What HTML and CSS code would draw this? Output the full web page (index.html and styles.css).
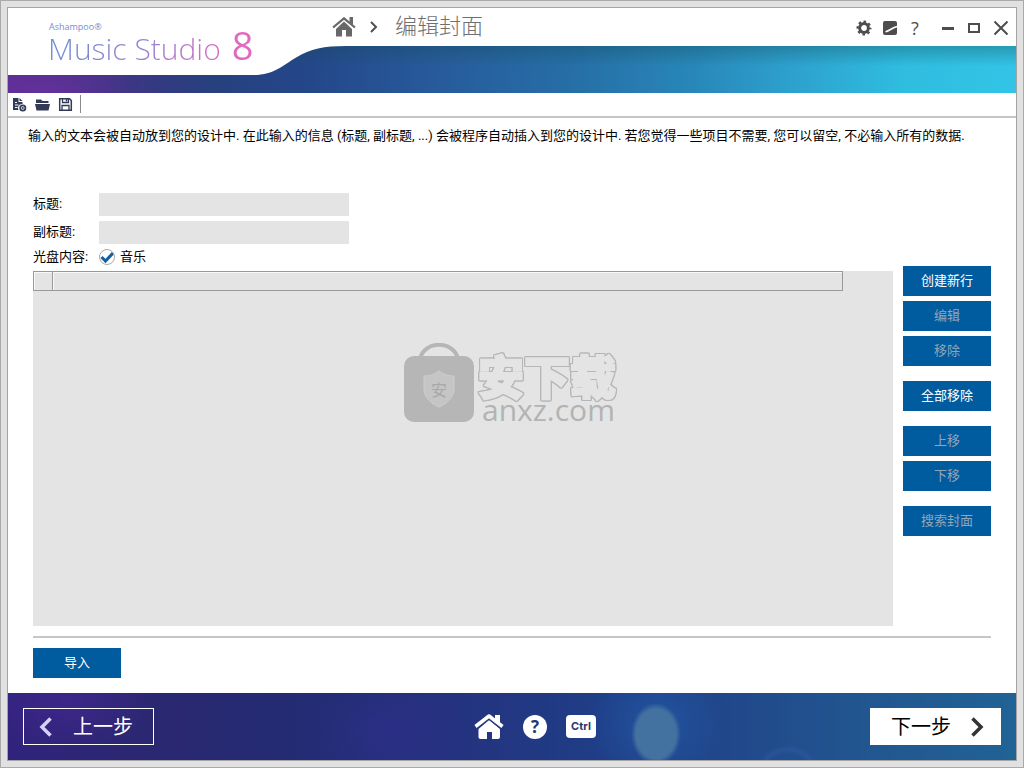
FILE: index.html
```html
<!DOCTYPE html>
<html lang="zh-CN">
<head>
<meta charset="utf-8">
<title>Ashampoo Music Studio 8</title>
<link rel="stylesheet" href="styles.css">
</head>
<body>
<div class="frame">
<div class="window">
  <header class="header">
    <svg class="header-shape" aria-hidden="true"><path d="M0 0H4000V38H338C316 38 302 41 289 49C275 57 266 67 246 67H0Z" fill="#fff"/></svg>
    <div class="logo">
      <span class="brand">Ashampoo®</span>
      <span class="product"><span>Music Studio</span><b>8</b></span>
    </div>
    <nav class="crumbs">
      <a href="#" aria-label="主页"><svg width="24" height="20" viewBox="0 0 24 20"><path d="M12 4.500L20 12V19.500H14V13H10V19.500H4V12Z" fill="#686868"/><path d="M1 10.500L12 1.300L23 10.500" fill="none" stroke="#686868" stroke-width="2.200"/><path d="M17.500 0H21V8L17.500 5Z" fill="#686868"/></svg></a>
      <svg class="sep" width="9" height="12" viewBox="0 0 9 12"><path d="M2 1L7 6L2 11" fill="none" stroke="#505050" stroke-width="2"/></svg>
      <h1>编辑封面</h1>
    </nav>
    <div class="controls">
      <button aria-label="设置"><svg width="16" height="16" viewBox="0 0 16 16"><circle cx="8" cy="8" r="4.400" fill="none" stroke="#4d4d4d" stroke-width="3"/><circle cx="8" cy="8" r="6.400" fill="none" stroke="#4d4d4d" stroke-width="2.200" stroke-dasharray="2.500 2.530" stroke-dashoffset="1.250"/></svg></button>
      <button aria-label="皮肤"><svg width="16" height="16" viewBox="0 0 16 16"><rect x="1" y="1" width="14" height="14" rx="2" fill="#4d4d4d"/><path d="M3.500 11.800C7 11 9 8.500 15 6.500" fill="none" stroke="#fff" stroke-width="1.600"/></svg></button>
      <button class="help" aria-label="帮助">?</button>
      <button class="min" aria-label="最小化"><svg width="14" height="16" viewBox="0 0 14 16"><path d="M1 8.500H13" stroke="#4d4d4d" stroke-width="3"/></svg></button>
      <button class="max" aria-label="最大化"><svg width="14" height="16" viewBox="0 0 14 16"><rect x="2" y="4" width="10" height="8" fill="none" stroke="#4d4d4d" stroke-width="2"/></svg></button>
      <button class="close" aria-label="关闭"><svg width="16" height="16" viewBox="0 0 16 16"><path d="M1.500 1.500L14.500 14.500M14.500 1.500L1.500 14.500" stroke="#4d4d4d" stroke-width="2"/></svg></button>
    </div>
  </header>

  <div class="toolbar">
    <button aria-label="新建"><svg width="15" height="15" viewBox="0 0 15 15"><path d="M1 1H6.500V5H10.500V7A4 4 0 0 0 6.500 13H1Z" fill="#333a56"/><path d="M7.500 1L10.500 4H7.500Z" fill="#333a56"/><path d="M3 5.500H5M3 8H6.500M3 10.500H5.500" stroke="#fff"/><circle cx="10.800" cy="11" r="2.600" fill="#fff" stroke="#333a56" stroke-width="1.800"/><circle cx="10.800" cy="11" r="1" fill="#333a56"/></svg></button>
    <button aria-label="打开"><svg width="15" height="15" viewBox="0 0 15 15"><path d="M1 2.500H6L7.500 4H13.500V6H1Z" fill="#333a56"/><path d="M0 7H15L13.500 13.500H1.500Z" fill="#333a56"/></svg></button>
    <button aria-label="保存"><svg width="15" height="15" viewBox="0 0 15 15"><path d="M1.700 1.700H11.500L13.300 3.500V13.300H1.700Z" fill="none" stroke="#333a56" stroke-width="1.500"/><path d="M4.500 2V5.500H10.500V2M4 13V8.500H11V13" fill="none" stroke="#333a56" stroke-width="1.300"/><path d="M8.500 2V4.500" stroke="#333a56" stroke-width="1.500"/></svg></button>
  </div>

  <main class="main">
    <p class="intro">输入的文本会被自动放到您的设计中. 在此输入的信息 (标题, 副标题, ...) 会被程序自动插入到您的设计中. 若您觉得一些项目不需要, 您可以留空, 不必输入所有的数据.</p>
    <form class="fields">
      <label for="title">标题:</label><input id="title" type="text">
      <label for="subtitle">副标题:</label><input id="subtitle" type="text">
      <span>光盘内容:</span><label class="check"><input type="checkbox" checked>音乐</label>
    </form>
    <div class="editor">
      <div class="list">
        <table><thead><tr><th class="mark"></th><th></th></tr></thead></table>
        <div class="watermark">
          <svg width="72" height="82" viewBox="0 0 72 82"><path d="M17 16C21 -3 51 -3 55 16" fill="none" stroke="#b6b6b6" stroke-width="4"/><rect x="1" y="13" width="70" height="66" rx="10" fill="#b6b6b6"/><path d="M36 28C41 32 46 33 51 33V46C51 55 43 61 36 64C29 61 21 55 21 46V33C26 33 31 32 36 28Z" fill="#c5c5c5" stroke="#cecece"/><text x="36" y="53" text-anchor="middle" class="shield">安</text></svg>
          <div class="words"><span class="cn">安下载</span><span class="site">anxz.com</span></div>
        </div>
      </div>
      <div class="actions">
        <button class="btn">创建新行</button>
        <button class="btn" disabled>编辑</button>
        <button class="btn" disabled>移除</button>
        <button class="btn group">全部移除</button>
        <button class="btn group" disabled>上移</button>
        <button class="btn" disabled>下移</button>
        <button class="btn group" disabled>搜索封面</button>
      </div>
    </div>
    <div class="import"><button class="btn">导入</button></div>
  </main>

  <footer class="footer">
    <button class="step prev"><svg width="14" height="20" viewBox="0 0 14 20"><path d="M11.500 1.500L3 10L11.500 18.500" fill="none" stroke="#d5d2fa" stroke-width="3.500"/></svg>上一步</button>
    <nav class="links">
      <a href="#" aria-label="主页"><svg width="30" height="26" viewBox="0 0 30 26"><path d="M15 6L26 15V23Q26 25 24 25H18V18H13V25H6.500Q4.500 25 4.500 23V15Z" fill="#fff"/><path d="M1.500 12.500L15 2L28.500 12.500" fill="none" stroke="#fff" stroke-width="3.500" stroke-linejoin="round"/><path d="M21 1H26V9L21 5Z" fill="#fff"/><path d="M3.500 14.500L15 5.500L26.500 14.500" fill="none" stroke="#243b82"/></svg></a>
      <a href="#" class="round">?</a>
      <a href="#" class="ctrl">Ctrl</a>
    </nav>
    <button class="step next">下一步<svg width="14" height="20" viewBox="0 0 14 20"><path d="M2.500 1.500L11 10L2.500 18.500" fill="none" stroke="#333" stroke-width="3.500"/></svg></button>
  </footer>
</div>
</div>
</body>
</html>
```
FILE: styles.css
```css
* { box-sizing: border-box; }
body {
  margin: 0;
  font: 13px/20px Roboto, "Noto Sans CJK SC", sans-serif;
  color: #000;
}
button, input { font: inherit; margin: 0; padding: 0; border: 0; background: none; }
svg { display: block; }
a { text-decoration: none; }
.frame {
  min-height: 100vh;
  display: flex;
  padding: 6px;
  border: 1px solid #a9a9a9;
  background: #e1e1e1;
}
.window {
  flex: 1;
  display: flex;
  flex-direction: column;
  border: 1px solid #a4a4a4;
  background: #fff;
}
.header {
  position: relative;
  height: 85px;
  display: flex;
  align-items: flex-start;
  font-family: "Open Sans", "Noto Sans CJK SC", sans-serif;
  background:
    linear-gradient(rgba(20, 75, 85, 0) 38px, rgba(20, 75, 85, .35) 38px, rgba(20, 75, 85, 0) 58px),
    radial-gradient(ellipse 90px 40px at 4% 100%, rgba(110, 50, 165, .6), transparent),
    linear-gradient(90deg, #5c2d93 0%, #433386 9%, #27407e 20%, #24478a 30%, #275a9b 42%, #2670a8 57%, #2887b9 68%, #2d9fcd 77%, #2fbde0 89%, #32c4e6 100%);
}
.header-shape { position: absolute; inset: 0; width: 100%; height: 100%; }
.logo, .crumbs, .controls { position: relative; display: flex; }
.logo { flex-direction: column; width: 324px; padding: 12px 0 0 40px; }
.brand { padding-left: 1px; font-size: 9px; line-height: 13px; color: #7f8bcc; }
.product {
  align-self: flex-start;
  display: flex;
  align-items: baseline;
  gap: 11px;
  margin-top: -4px;
  font-size: 30px;
  font-weight: 300;
  line-height: 30px;
  white-space: nowrap;
  color: transparent;
  background: linear-gradient(90deg, #6d8fd6, #9c80cf 50%, #cf70c4 80%, #e668c0);
  -webkit-background-clip: text;
  background-clip: text;
  -webkit-text-stroke: 0 transparent;
}
.product b { font-size: 38px; font-weight: 500; line-height: 32px; }
.crumbs { flex: 1; height: 38px; align-items: center; }
.crumbs .sep { margin: 0 17px 0 13px; }
h1 { margin: 0; padding-bottom: 4px; font-size: 22px; line-height: 34px; font-weight: 300; color: #707070; }
.controls { height: 40px; align-items: center; padding-right: 7px; }
.controls button { margin-right: 10px; }
.controls .help { width: 14px; font-size: 18px; color: #4d4d4d; margin-right: 19px; }
.controls .min, .controls .max { margin-right: 12px; }
.controls .close { margin: 0; }
.toolbar {
  display: flex;
  align-items: center;
  gap: 8px;
  height: 25px;
  padding: 0 0 1px 4px;
  border-bottom: 2px solid #c6c6c6;
}
.toolbar::after { content: ""; width: 1px; height: 18px; margin-left: -1px; background: #8a8a8a; }
.main { flex: 1; display: flex; flex-direction: column; padding: 8px 25px 15px; }
.intro { margin: 0 0 47px; padding-right: 5px; text-indent: -5px; }
.fields {
  display: grid;
  grid-template-columns: 66px 250px;
  grid-template-rows: 23px 23px 17px;
  row-gap: 5px;
}
.fields > label { line-height: 22px; }
.fields > span, .fields > .check { line-height: 16px; }
.fields input[type="text"] { background: #e4e4e4; }
.check { display: flex; gap: 5px; }
.check input {
  appearance: none;
  width: 16px;
  height: 16px;
  border: 1px solid #a9a9a9;
  border-radius: 8px;
  background: url("data:image/svg+xml,%3Csvg xmlns='http://www.w3.org/2000/svg' viewBox='0 0 14 14'%3E%3Cpath d='M1.500 7L5.500 11L13 3' fill='none' stroke='%23125f9f' stroke-width='3'/%3E%3C/svg%3E");
}
.editor { flex: 1; display: flex; gap: 10px; padding-bottom: 10px; border-bottom: 2px solid #c6c6c6; }
.list { position: relative; flex: 1; margin-top: 5px; background: #e4e4e4; }
table { width: calc(100% - 50px); border-collapse: collapse; }
th { height: 19px; padding: 0; border: 1px solid #999; box-shadow: inset 1px 1px #f8f8f8; }
.mark { width: 19px; }
.watermark { position: absolute; top: 72px; left: calc(50% - 60px); display: flex; gap: 3px; color: #b3b3b3; }
.words { display: flex; flex-direction: column; gap: 4px; padding-top: 9px; }
.cn {
  font: 900 46px/44px "Noto Sans CJK SC", sans-serif;
  color: #e4e4e4;
  -webkit-text-stroke: 2px #e4e4e4;
  filter: drop-shadow(1px 0 #b6b6b6) drop-shadow(-1px 0 #b6b6b6) drop-shadow(0 1px #b6b6b6) drop-shadow(0 -1px #b6b6b6);
}
.site { padding-left: 4px; font: 500 30px/20px "Open Sans", sans-serif; }
.shield { font: 16px "Noto Sans CJK SC", sans-serif; fill: #a8a8a8; }
.actions { width: 88px; display: flex; flex-direction: column; gap: 5px; }
.btn { width: 88px; height: 30px; background: #005c9f; color: #fff; }
.btn:disabled { color: #91a5b7; }
.group { margin-top: 10px; }
.import { padding-top: 10px; }
.footer {
  height: 67px;
  display: flex;
  align-items: center;
  justify-content: space-between;
  padding: 0 15px;
  background:
    radial-gradient(ellipse 25px 31px at 648px 41px, #4371a0 80%, rgba(67, 113, 160, 0)),
    radial-gradient(ellipse 70px 65px at 648px 30px, rgba(35, 95, 175, .6), transparent),
    radial-gradient(ellipse 32px 30px at 780px 82px, transparent 70%, rgba(50, 90, 165, .5) 85%, transparent),
    radial-gradient(ellipse 90px 50px at 60px 8px, rgba(75, 40, 155, .5), transparent),
    radial-gradient(ellipse 80px 50px at 380px 40px, rgba(60, 45, 155, .35), transparent),
    linear-gradient(90deg, #31237c 0%, #2a2870 15%, #232c74 30%, #243380 45%, #1f3d86 58%, #20468a 70%, #22548f 83%, #206395 100%);
}
.step {
  display: flex;
  align-items: center;
  justify-content: space-between;
  width: 131px;
  height: 37px;
  border: 1px solid #fff;
  font-size: 20px;
}
.prev { padding: 0 20px 0 15px; color: #fff; }
.next { padding: 0 16px 0 20px; background: #fff; color: #000; }
.links { display: flex; align-items: center; gap: 19px; padding-left: 46px; }
.round, .ctrl { background: #fff; color: #26366f; text-align: center; font-weight: 700; }
.round { width: 24px; height: 24px; border-radius: 12px; font: 700 17px/24px "Open Sans", sans-serif; }
.ctrl { width: 30px; height: 23px; border-radius: 4px; font: 700 11px/22px Inter, sans-serif; }
```
